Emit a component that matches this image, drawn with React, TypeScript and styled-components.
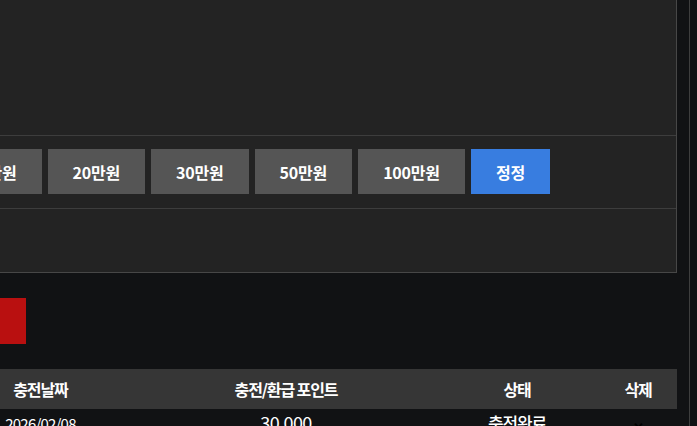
import React from 'react'

import styled, { createGlobalStyle } from 'styled-components'

const amounts = ['10만원', '20만원', '30만원', '50만원', '100만원']

const rows = [{ date: '2026/02/08', point: '30,000', status: '충전완료' }]

export default function App() {
  return (
    <>
      <GlobalStyle />
      <Page>
        <Panel>
          <Blank />
          <ButtonRow>
            {amounts.map((a) => (
              <AmountButton key={a}>{a}</AmountButton>
            ))}
            <AmountButton primary>정정</AmountButton>
          </ButtonRow>
          <Footer />
        </Panel>
        <SubmitButton>신청</SubmitButton>
        <Table>
          <HeadRow>
            <HeadCell>충전날짜</HeadCell>
            <HeadCell>충전/환급 포인트</HeadCell>
            <HeadCell>상태</HeadCell>
            <HeadCell>삭제</HeadCell>
          </HeadRow>
          {rows.map((r) => (
            <BodyRow key={r.date}>
              <DateCell>{r.date}</DateCell>
              <PointCell>{r.point}</PointCell>
              <StatusCell>{r.status}</StatusCell>
              <DeleteCell>✕</DeleteCell>
            </BodyRow>
          ))}
        </Table>
      </Page>
    </>
  )
}

const GlobalStyle = createGlobalStyle`
  html, body {
    margin: 0;
    padding: 0;
    background: #111214;
    overflow: hidden;
  }
  body {
    font-family: 'Noto Sans CJK KR', 'Noto Sans', sans-serif;
    color: #fff;
  }
`

const Page = styled.div`
  width: 733px;
  margin-left: -56px;
  padding-right: 12px;
  border-right: 1px solid #3e3e3e;
  min-height: 100vh;
  display: flex;
  flex-direction: column;
  align-items: flex-start;

  & > * {
    flex-shrink: 0;
  }
`

const Panel = styled.div`
  align-self: stretch;
  margin-top: -1px;
  background: #232323;
  border: 1px solid #474747;
  border-left: none;
  display: flex;
  flex-direction: column;
`

const Blank = styled.div`
  height: 135px;
  border-bottom: 1px solid #3d3d3d;
`

const ButtonRow = styled.div`
  display: flex;
  gap: 6px;
  padding: 13px 0 14px;
  border-bottom: 1px solid #3d3d3d;
`

const AmountButton = styled.button<{ primary?: boolean }>`
  height: 45px;
  padding: 0 25px;
  border: none;
  background: ${(p) => (p.primary ? '#387de0' : '#555555')};
  color: #fff;
  font-family: inherit;
  font-size: 16px;
  font-weight: 700;
  letter-spacing: -0.2px;
`

const Footer = styled.div`
  height: 63px;
`

const SubmitButton = styled.button`
  margin-top: 25px;
  width: 82px;
  height: 46px;
  border: none;
  background: #b91010;
  color: #f0a020;
  font-family: inherit;
  font-size: 16px;
  font-weight: 700;
  letter-spacing: -1px;
`

const Table = styled.div`
  align-self: stretch;
  margin-top: 25px;
  display: flex;
  flex-direction: column;
`

const HeadRow = styled.div`
  display: grid;
  grid-template-columns: 193px 298px 164px 78px;
  height: 40px;
  align-items: center;
  background: #363636;
`

const HeadCell = styled.div`
  text-align: center;
  font-size: 16px;
  font-weight: 700;
  letter-spacing: -1.1px;
`

const BodyRow = styled.div`
  display: grid;
  grid-template-columns: 193px 298px 164px 78px;
  height: 40px;
  align-items: start;
`

const DateCell = styled.div`
  text-align: center;
  padding-top: 4px;
  font-size: 15px;
  letter-spacing: -0.8px;
`

const PointCell = styled.div`
  text-align: center;
  font-size: 18px;
  letter-spacing: -0.6px;
`

const StatusCell = styled.div`
  text-align: center;
  padding-top: 1px;
  font-size: 17px;
  font-weight: 500;
  letter-spacing: -1.1px;
`

const DeleteCell = styled.div`
  text-align: center;
  padding-top: 8px;
  font-size: 13px;
  font-weight: 700;
  color: #000;
`
